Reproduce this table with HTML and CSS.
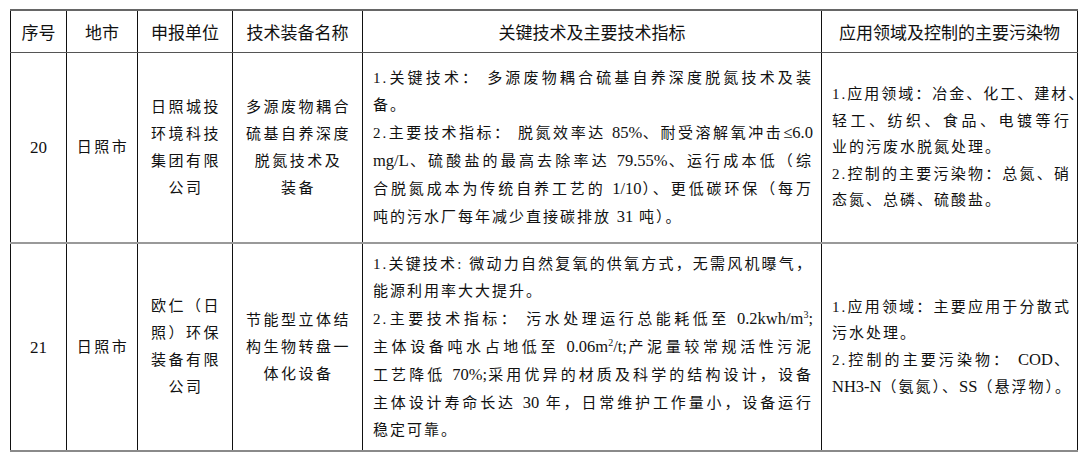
FILE: index.html
```html
<!DOCTYPE html>
<html lang="zh-CN">
<head>
<meta charset="utf-8">
<link rel="stylesheet" href="styles.css">
</head>
<body>
<table class="grid">
  <colgroup>
    <col class="c1"><col class="c2"><col class="c3"><col class="c4"><col class="c5"><col class="c6">
  </colgroup>
  <thead>
    <tr>
      <th>序号</th><th>地市</th><th>申报单位</th><th>技术装备名称</th><th>关键技术及主要技术指标</th><th>应用领域及控制的主要污染物</th>
    </tr>
  </thead>
  <tbody>
    <tr class="r1">
      <td class="num">20</td>
      <td class="ctr">日照市</td>
      <td class="ctr">日照城投<br>环境科技<br>集团有限<br>公司</td>
      <td class="ctr">多源废物耦合<br>硫基自养深度<br>脱氮技术及<br>装备</td>
      <td class="txt">
        <span class="j">1.关键技术： 多源废物耦合硫基自养深度脱氮技术及装</span>
        <span class="l">备。</span>
        <span class="j">2.主要技术指标： 脱氮效率达 <span class="n">85%</span>、耐受溶解氧冲击<span class="n">≤6.0</span></span>
        <span class="j"><span class="n">mg/L</span>、硫酸盐的最高去除率达 <span class="n">79.55%</span>、运行成本低（综</span>
        <span class="j">合脱氮成本为传统自养工艺的 <span class="n">1/10</span>）、更低碳环保（每万</span>
        <span class="l">吨的污水厂每年减少直接碳排放 <span class="n">31</span> 吨）。</span>
      </td>
      <td class="txt t6">
        <span class="j">1.应用领域：冶金、化工、建材、</span>
        <span class="j">轻工、纺织、食品、电镀等行</span>
        <span class="l">业的污废水脱氮处理。</span>
        <span class="j">2.控制的主要污染物：总氮、硝</span>
        <span class="l">态氮、总磷、硫酸盐。</span>
      </td>
    </tr>
    <tr class="r2">
      <td class="num">21</td>
      <td class="ctr">日照市</td>
      <td class="ctr">欧仁（日<br>照）环保<br>装备有限<br>公司</td>
      <td class="ctr">节能型立体结<br>构生物转盘一<br>体化设备</td>
      <td class="txt">
        <span class="j">1.关键技术: 微动力自然复氧的供氧方式，无需风机曝气，</span>
        <span class="l">能源利用率大大提升。</span>
        <span class="j">2.主要技术指标： 污水处理运行总能耗低至 <span class="n">0.2kwh/m<sup>3</sup>;</span></span>
        <span class="j">主体设备吨水占地低至 <span class="n">0.06m<sup>2</sup>/t;</span>产泥量较常规活性污泥</span>
        <span class="j">工艺降低 <span class="n">70%;</span>采用优异的材质及科学的结构设计，设备</span>
        <span class="j">主体设计寿命长达 <span class="n">30</span> 年，日常维护工作量小，设备运行</span>
        <span class="l">稳定可靠。</span>
      </td>
      <td class="txt t6">
        <span class="j">1.应用领域：主要应用于分散式</span>
        <span class="l">污水处理。</span>
        <span class="j">2.控制的主要污染物： <span class="n">COD</span>、</span>
        <span class="l"><span class="n">NH3-N</span>（氨氮）、<span class="n">SS</span>（悬浮物）。</span>
      </td>
    </tr>
  </tbody>
</table>
</body>
</html>
```
FILE: styles.css
```css
html, body {
  margin: 0;
  padding: 0;
  background: #ffffff;
}

body {
  padding: 9px 0 0 10px;
  color: #111111;
  font-family: "Liberation Serif", "Noto Sans CJK SC", serif;
}

.grid {
  border-collapse: collapse;
  table-layout: fixed;
  width: 1067px;
  border-top: 2px solid #666666;
  border-bottom: 2px solid #8a8a8a;
}

.c1 { width: 56px; }
.c2 { width: 71px; }
.c3 { width: 95px; }
.c4 { width: 130px; }
.c5 { width: 459px; }
.c6 { width: 256px; }

th, td {
  border-left: 1px solid #111111;
  border-right: 1px solid #111111;
  padding: 0;
}

th {
  height: 41px;
  font-family: "Noto Sans CJK SC", sans-serif;
  font-weight: 400;
  font-size: 17px;
  color: #111111;
  text-align: center;
  vertical-align: middle;
  border-bottom: 1px solid #555555;
}

td {
  vertical-align: middle;
  font-size: 15px;
  line-height: 27px;
  letter-spacing: 2px;
}

.r1 td {
  height: 189px;
  border-bottom: 2px solid #999999;
}

.r2 td {
  height: 206px;
}

.num {
  text-align: center;
  font-size: 17px;
  letter-spacing: 0;
}

.ctr {
  text-align: center;
  padding-left: 2px;
  letter-spacing: 2.5px;
}

.txt {
  padding: 0 8px 0 10px;
}

.t6 {
  padding: 0 6px 0 10px;
  line-height: 26.6px;
}

.j {
  display: block;
  text-align: justify;
  text-align-last: justify;
  white-space: nowrap;
}

.l {
  display: block;
  text-align: left;
  white-space: nowrap;
}

.n {
  letter-spacing: 0;
  font-size: 16.5px;
}

sup {
  font-size: 10px;
  line-height: 0;
  vertical-align: 6px;
}
```
